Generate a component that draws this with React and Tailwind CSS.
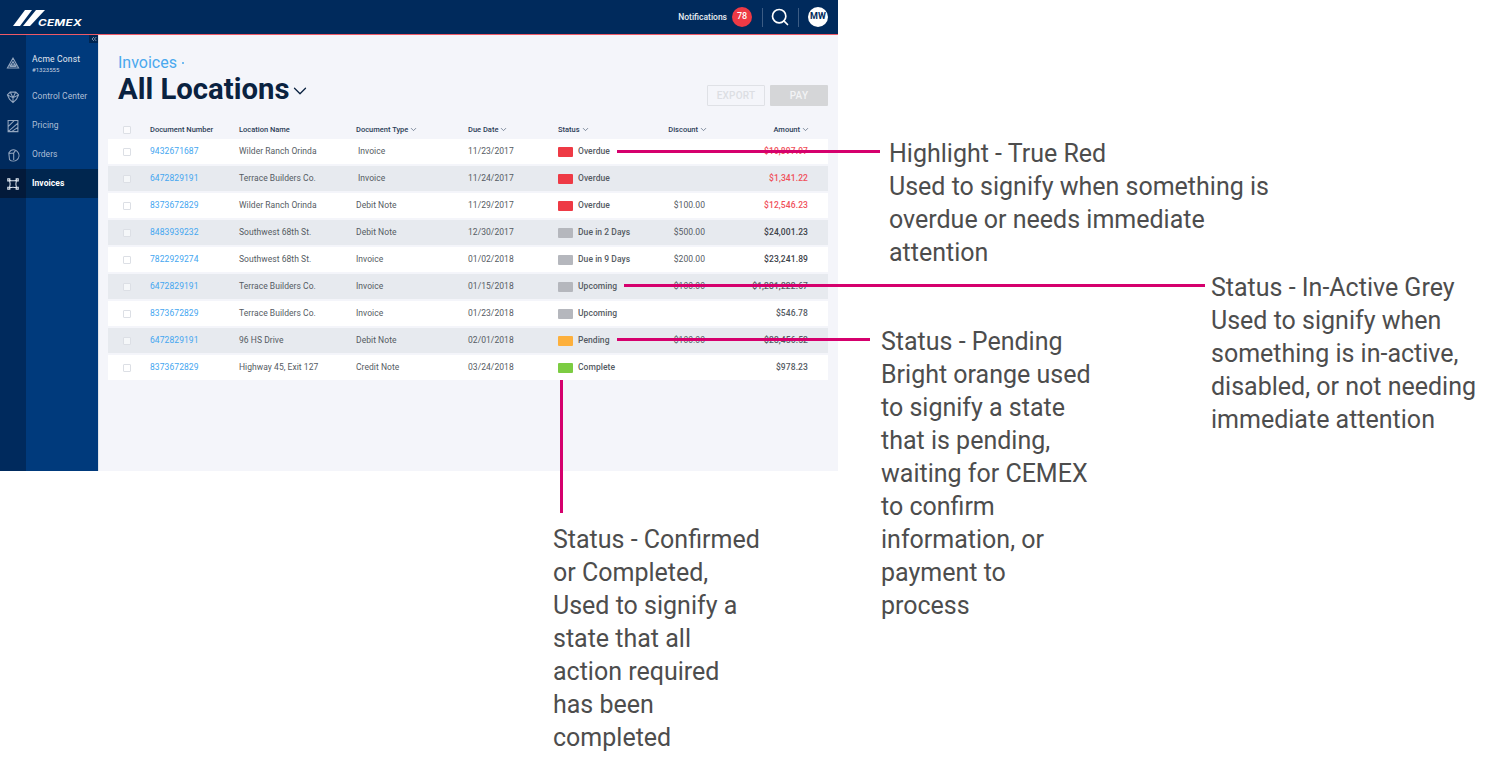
import { Search, ChevronDown, ChevronsLeft } from 'lucide-react';

const rows = [
  { doc: '9432671687', loc: 'Wilder Ranch Orinda', type: 'Invoice', indent: true, due: '11/23/2017', status: 'Overdue', color: 'bg-[#ee3a45]', amount: '$10,897.97', red: true },
  { doc: '6472829191', loc: 'Terrace Builders Co.', type: 'Invoice', indent: true, due: '11/24/2017', status: 'Overdue', color: 'bg-[#ee3a45]', amount: '$1,341.22', red: true },
  { doc: '8373672829', loc: 'Wilder Ranch Orinda', type: 'Debit Note', due: '11/29/2017', status: 'Overdue', color: 'bg-[#ee3a45]', discount: '$100.00', amount: '$12,546.23', red: true },
  { doc: '8483939232', loc: 'Southwest 68th St.', type: 'Debit Note', due: '12/30/2017', status: 'Due in 2 Days', color: 'bg-[#b5b7bd]', discount: '$500.00', amount: '$24,001.23', bold: true },
  { doc: '7822929274', loc: 'Southwest 68th St.', type: 'Invoice', due: '01/02/2018', status: 'Due in 9 Days', color: 'bg-[#b5b7bd]', discount: '$200.00', amount: '$23,241.89', bold: true },
  { doc: '6472829191', loc: 'Terrace Builders Co.', type: 'Invoice', due: '01/15/2018', status: 'Upcoming', color: 'bg-[#b5b7bd]', discount: '$100.00', amount: '$1,231,222.67' },
  { doc: '8373672829', loc: 'Terrace Builders Co.', type: 'Invoice', due: '01/23/2018', status: 'Upcoming', color: 'bg-[#b5b7bd]', amount: '$546.78' },
  { doc: '6472829191', loc: '96 HS Drive', type: 'Debit Note', due: '02/01/2018', status: 'Pending', color: 'bg-[#fdb03c]', discount: '$100.00', amount: '$23,456.52' },
  { doc: '8373672829', loc: 'Highway 45, Exit 127', type: 'Credit Note', due: '03/24/2018', status: 'Complete', color: 'bg-[#7ccc42]', amount: '$978.23' },
];

const menu = [
  { label: 'Control Center', icon: <path d="M6 3h8l4 4-3 6-5 5-5-5-3-6zM2 7l8 4 8-4M6 3l4 8 4-8M10 11v7" /> },
  { label: 'Pricing', icon: <path d="M3 2h14v16H3zM3 11l9-9M3 18l14-12M8 18l9-6" /> },
  { label: 'Orders', icon: <path d="M7 3.5A8 8 0 1 1 5 16.5L4 7zM4 8l7-1 3-4M11 7v10" /> },
  { label: 'Invoices', active: true, icon: <path d="M5 4.5c3 1 7 1 10 0-1 3-1 8 0 11-3-1-7-1-10 0 1-3 1-8 0-11zM2.5 2.5h3v3h-3zM14.5 2.5h3v3h-3zM2.5 14.5h3v3h-3zM14.5 14.5h3v3h-3z" /> },
];

function Icon({ children }) {
  return (
    <svg viewBox="0 0 20 20" className="h-[14px] w-[14px]" fill="none" stroke="currentColor" strokeWidth="1.5">
      {children}
    </svg>
  );
}

function Sidebar() {
  return (
    <aside className="relative flex w-[99px] shrink-0 flex-col border-r border-[#dfe3ea] bg-[#003a7c]">
      <div className="absolute right-0 top-0 flex h-[8px] w-[9px] items-center justify-center bg-[#002653] text-[#b9c6d8]">
        <ChevronsLeft size={8} />
      </div>
      <div className="flex h-[47px] shrink-0 items-stretch">
        <div className="flex w-[26px] items-center justify-center bg-[#002a5d] pt-[9px] text-[#93a6bf]">
          <Icon><path d="M10 3l8 14H2zM10 8l4 7H6zM4.5 13h11" /></Icon>
        </div>
        <div className="flex flex-col justify-center pl-[6px] pt-[10px]">
          <div className="text-[8.5px] leading-[11px] tracking-[0.2px] text-[#e6ebf2]">Acme Const</div>
          <div className="text-[6px] leading-[9px] text-[#c8d2e0]">#1323555</div>
        </div>
      </div>
      {menu.map((m) => (
        <div key={m.label} className={m.active ? 'flex h-[29px] shrink-0 bg-[#00264f]' : 'flex h-[29px] shrink-0'}>
          <div className={m.active ? 'flex w-[26px] items-center justify-center bg-[#031a3a] text-[#dfe6ef]' : 'flex w-[26px] items-center justify-center bg-[#002a5d] text-[#93a6bf]'}>
            <Icon>{m.icon}</Icon>
          </div>
          <div className={m.active ? 'flex items-center pl-[6px] text-[8.5px] font-bold tracking-[0.05px] text-white' : 'flex items-center pl-[6px] text-[8.5px] tracking-[0.05px] text-[#aebfd6]'}>
            {m.label}
          </div>
        </div>
      ))}
      <div className="w-[26px] flex-1 bg-[#002a5d]" />
    </aside>
  );
}

function Header() {
  return (
    <header className="flex h-[35px] shrink-0 items-center justify-between border-b-[1.5px] border-[#ee5a66] bg-[#002a5c] pr-[10px]">
      <div className="flex items-center pl-[13px]">
        <svg viewBox="0 0 32 17" className="h-[17px] w-[32px]" fill="white">
          <polygon points="0,17 12,1 19,1 7,17" />
          <polygon points="10,17 23,1 32,1 17,17" />
        </svg>
        <span className="-ml-[7px] mt-[10px] origin-left scale-x-[1.3] text-[9px] font-bold italic leading-none tracking-[0.2px] text-white" style={{ fontFamily: 'Inter, sans-serif' }}>CEMEX</span>
      </div>
      <div className="flex items-center">
        <span className="text-[8.5px] font-medium text-[#e8edf3]">Notifications</span>
        <span className="ml-[5px] flex h-[20px] w-[20px] items-center justify-center rounded-full bg-[#ee3a45] text-[9px] font-medium text-white">78</span>
        <span className="ml-[10px] h-[19px] w-px bg-[#3c5c84]" />
        <Search size={20} strokeWidth={2} className="ml-[7px] text-white" />
        <span className="ml-[8px] h-[19px] w-px bg-[#3c5c84]" />
        <span className="ml-[9px] flex h-[20px] w-[20px] items-center justify-center rounded-full bg-white text-[9px] font-bold text-[#002a5c]">MW</span>
      </div>
    </header>
  );
}

function Th({ className, children, sort = true }) {
  return (
    <div className={className}>
      <span>{children}</span>
      {sort && <ChevronDown size={9} className="ml-[1px] text-[#5b6b80]" />}
    </div>
  );
}

function Box() {
  return <span className="h-[8px] w-[8px] rounded-[1px] border border-[#dcdfe5] bg-white/60" />;
}

function Table() {
  return (
    <div>
      <div className="flex h-[19px] items-center pl-[15px] text-[7.5px] font-medium text-[#2c3d58]">
        <div className="flex w-[27px]"><Box /></div>
        <Th className="flex w-[89px] items-center" sort={false}>Document Number</Th>
        <Th className="flex w-[117px] items-center" sort={false}>Location Name</Th>
        <Th className="flex w-[112px] items-center">Document Type</Th>
        <Th className="flex w-[90px] items-center">Due Date</Th>
        <Th className="flex w-[100px] items-center">Status</Th>
        <Th className="flex w-[50px] items-center justify-end">Discount</Th>
        <Th className="flex w-[102px] items-center justify-end">Amount</Th>
      </div>
      <div className="flex flex-col gap-[2px]">
        {rows.map((r, i) => (
          <div key={i} className={i % 2 ? 'flex h-[25px] items-center bg-[#e7eaef] pl-[15px] text-[8.5px] text-[#555b63]' : 'flex h-[25px] items-center bg-white pl-[15px] text-[8.5px] text-[#555b63]'}>
            <div className="flex w-[27px]"><Box /></div>
            <div className="w-[89px] tracking-[0.08px] text-[#44a6f0]">{r.doc}</div>
            <div className="w-[117px] tracking-[0.05px]">{r.loc}</div>
            <div className={r.indent ? 'w-[112px] pl-[2px] tracking-[0.05px]' : 'w-[112px] tracking-[0.05px]'}>{r.type}</div>
            <div className="w-[90px] tracking-[0.05px]">{r.due}</div>
            <div className="flex w-[100px] items-center">
              <span className={`h-[10px] w-[15px] rounded-[1px] ${r.color}`} />
              <span className="ml-[5px] font-medium tracking-[0.05px]">{r.status}</span>
            </div>
            <div className="w-[47px] text-right tracking-[0.05px]">{r.discount}</div>
            <div className={r.red ? 'w-[103px] text-right font-medium tracking-[0.1px] text-[#f0505a]' : r.bold ? 'w-[103px] text-right font-medium tracking-[0.1px] text-[#3c4148]' : 'w-[103px] text-right font-medium tracking-[0.1px]'}>{r.amount}</div>
          </div>
        ))}
      </div>
    </div>
  );
}

function Callout({ className, title, lines }) {
  return (
    <div className={`absolute text-[25px] leading-[33px] text-[#4d4d4d] ${className}`}>
      <div>{title}</div>
      {lines.map((l) => <div key={l}>{l}</div>)}
    </div>
  );
}

export default function App() {
  return (
    <div className="relative h-[780px] w-[1502px] overflow-hidden bg-white" style={{ fontFamily: 'Roboto, sans-serif' }}>
      <div className="flex h-[471px] w-[838px] flex-col">
        <Header />
        <div className="flex flex-1">
          <Sidebar />
          <main className="flex-1 bg-[#f4f5fa] pl-[9px] pr-[10px]">
            <div className="flex items-start justify-between">
              <div className="pl-[10px] pt-[18px]">
                <div className="flex items-center text-[16px] leading-[20px] text-[#4aa8ee]">
                  Invoices
                  <span className="ml-[5px] h-[2px] w-[2px] rounded-full bg-[#4aa8ee]" />
                </div>
                <div className="flex items-center text-[29.3px] font-bold leading-[32px] text-[#0a2240]">
                  All Locations
                  <ChevronDown size={22} strokeWidth={1.4} className="mt-[3px] text-[#0a2240]" />
                </div>
              </div>
              <div className="mt-[50px] flex gap-[5px]">
                <div className="flex h-[21px] w-[58px] items-center justify-center rounded-[1px] border border-[#dfe1e6] text-[10px] font-medium tracking-[0.2px] text-[#dcdee3]">EXPORT</div>
                <div className="flex h-[21px] w-[58px] items-center justify-center rounded-[1px] bg-[#d5d6d8] text-[10px] font-medium tracking-[0.2px] text-[#f2f3f5]">PAY</div>
              </div>
            </div>
            <div className="mt-[14px]">
              <Table />
            </div>
          </main>
        </div>
      </div>

      {/* callout leader lines */}
      <div className="absolute left-[617px] top-[150px] h-[3px] w-[263px] bg-[#d5006d]" />
      <div className="absolute left-[624px] top-[284px] h-[3px] w-[581px] bg-[#d5006d]" />
      <div className="absolute left-[617px] top-[338px] h-[3px] w-[253px] bg-[#d5006d]" />
      <div className="absolute left-[560px] top-[380px] h-[133px] w-[3px] bg-[#d5006d]" />

      <Callout
        className="left-[889px] top-[137px]"
        title="Highlight - True Red"
        lines={['Used to signify when something is', 'overdue or needs immediate', 'attention']}
      />
      <Callout
        className="left-[1211px] top-[271px]"
        title="Status - In-Active Grey"
        lines={['Used to signify when', 'something is in-active,', 'disabled, or not needing', 'immediate attention']}
      />
      <Callout
        className="left-[881px] top-[325px]"
        title="Status - Pending"
        lines={['Bright orange used', 'to signify a state', 'that is pending,', 'waiting for CEMEX', 'to confirm', 'information, or', 'payment to', 'process']}
      />
      <Callout
        className="left-[553px] top-[523px]"
        title="Status - Confirmed"
        lines={['or Completed,', 'Used to signify a', 'state that all', 'action required', 'has been', 'completed']}
      />
    </div>
  );
}
